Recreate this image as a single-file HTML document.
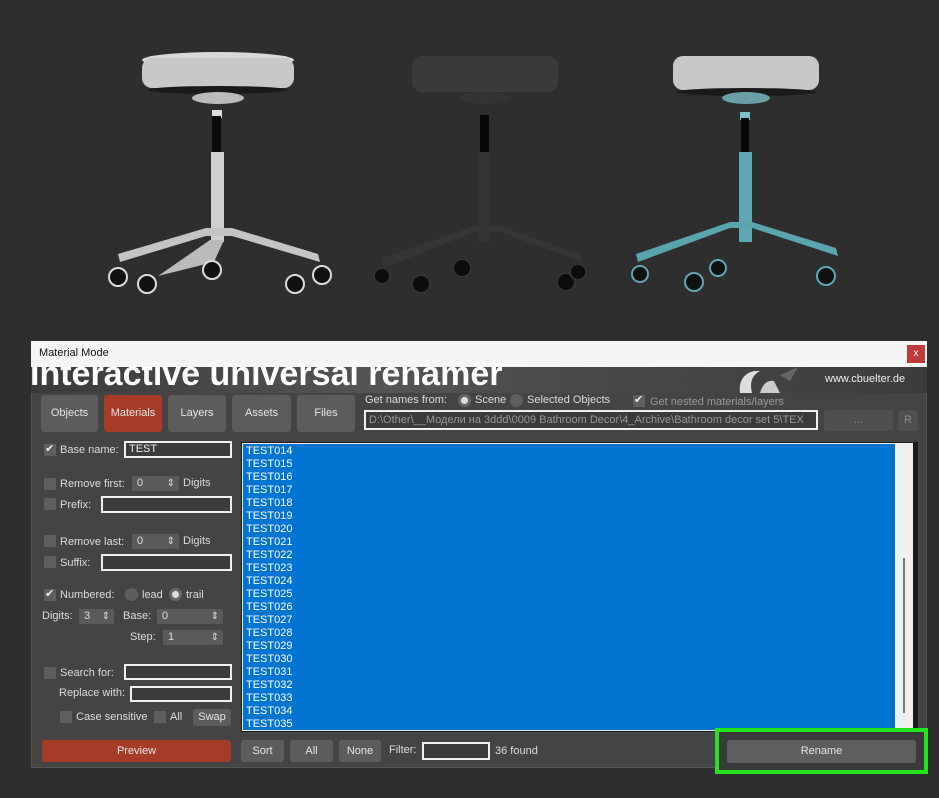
<!DOCTYPE html>
<html><head><meta charset="utf-8"><style>
*{margin:0;padding:0;box-sizing:border-box}
body{width:939px;height:798px;background:#2e2e2e;position:relative;overflow:hidden;font-family:"Liberation Sans","Noto Sans CJK SC",sans-serif;font-size:11px;color:#ddd}
.a{position:absolute}
.btn{position:absolute;background:#5c5c5c;border-radius:3px;color:#e6e6e6;text-align:center;font-size:11px}
.cb{position:absolute;width:12px;height:12px;background:#5e5e5e}
.cb.on::after{content:"✔";position:absolute;left:1px;top:-2px;font-size:11px;color:#eee}
.in{position:absolute;border:2px solid #f0f0f0;background:#3b3b3b;height:16px;color:#eee;padding-left:3px;line-height:12px}
.sp{position:absolute;background:#5a5a5a;height:15px;color:#ddd;padding-left:5px;line-height:15px}
.sp::after{content:"⇕";position:absolute;right:4px;top:0;font-size:10px}
.t{position:absolute;white-space:nowrap}
.rd{position:absolute;width:13px;height:13px;border-radius:50%;background:#5e5e5e}
</style></head><body>
<svg class="a" style="left:0;top:0" width="939" height="330">
 <g>
  <ellipse cx="218" cy="60" rx="76" ry="8" fill="#d8d8d8"/>
  <rect x="142" y="58" width="152" height="30" rx="10" fill="#c8c8c8"/>
  <ellipse cx="218" cy="90" rx="70" ry="4" fill="#1a1a1a"/>
  <ellipse cx="218" cy="98" rx="26" ry="6" fill="#bbb"/>
  <rect x="212" y="110" width="10" height="8" fill="#ddd"/>
  <rect x="212" y="116" width="9" height="38" fill="#0a0a0a"/>
  <rect x="211" y="152" width="13" height="90" fill="#d0d0d0"/>
  <path d="M120 262 L206 236 L232 236 L320 262 L318 254 L232 228 L206 228 L118 254Z" fill="#c4c4c4"/>
  <path d="M158 276 L210 240 L224 240 L214 262Z" fill="#bbb"/>
  <g fill="#111" stroke="#ddd" stroke-width="2"><circle cx="118" cy="277" r="9"/><circle cx="147" cy="284" r="9"/><circle cx="212" cy="270" r="9"/><circle cx="295" cy="284" r="9"/><circle cx="322" cy="275" r="9"/></g>
 </g>
 <g>
  <rect x="412" y="56" width="146" height="36" rx="10" fill="#3a3a3a"/>
  <ellipse cx="485" cy="98" rx="26" ry="6" fill="#333"/>
  <rect x="480" y="115" width="9" height="40" fill="#080808"/>
  <rect x="478" y="152" width="13" height="90" fill="#333"/>
  <path d="M384 268 L475 232 L500 232 L582 262 L580 254 L500 226 L475 226 L382 258Z" fill="#353535"/>
  <g fill="#0c0c0c" stroke="#333" stroke-width="2"><circle cx="382" cy="276" r="8"/><circle cx="421" cy="284" r="9"/><circle cx="462" cy="268" r="9"/><circle cx="566" cy="282" r="9"/><circle cx="578" cy="272" r="8"/></g>
 </g>
 <g>
  <rect x="673" y="56" width="146" height="34" rx="10" fill="#c8c8c8"/>
  <ellipse cx="746" cy="92" rx="70" ry="4" fill="#1a1a1a"/>
  <ellipse cx="746" cy="98" rx="24" ry="6" fill="#6a9fa6"/>
  <rect x="740" y="112" width="10" height="8" fill="#7bc0c8"/>
  <rect x="741" y="118" width="8" height="36" fill="#080808"/>
  <rect x="739" y="152" width="13" height="90" fill="#5fa8b1"/>
  <path d="M638 262 L730 228 L752 228 L838 256 L836 248 L752 222 L730 222 L636 254Z" fill="#5aa4ae"/>
  <g fill="#111" stroke="#5fa8b1" stroke-width="2"><circle cx="640" cy="274" r="8"/><circle cx="694" cy="282" r="9"/><circle cx="718" cy="268" r="8"/><circle cx="826" cy="276" r="9"/></g>
 </g>
</svg>

<div class="a" style="left:31px;top:341px;width:896px;height:427px;background:#444;border:1px solid #555"></div>
<div class="a" style="left:31px;top:367px;width:896px;height:26px;background:linear-gradient(90deg,#3a3a3a,#555 40%,#4a4a4a 60%,#3c3c3c)"></div>
<div class="t" style="left:30px;top:355px;font-size:34px;font-weight:bold;color:#fff;line-height:38px">Interactive universal renamer</div>
<svg class="a" style="left:730px;top:367px" width="70" height="26"><path d="M10 26 Q8 8 24 4 L30 4 Q18 10 22 26Z" fill="#ddd"/><path d="M30 26 Q34 12 44 14 L50 26Z" fill="#ccc"/><path d="M50 8 L68 0 L60 14Z" fill="#666"/></svg>
<div class="a" style="left:31px;top:341px;width:896px;height:26px;background:#f4f6f6"></div>
<div class="t" style="left:39px;top:347px;color:#111;font-size:11px">Material Mode</div>
<div class="a" style="left:907px;top:345px;width:18px;height:18px;background:#c0393b;color:#fff;text-align:center;line-height:17px;font-size:10px">x</div>
<div class="t" style="left:825px;top:373px;color:#eee;font-size:11px">www.cbuelter.de</div>

<div class="btn" style="left:41px;top:395px;width:57px;height:37px;line-height:37px">Objects</div>
<div class="btn" style="left:104px;top:395px;width:58px;height:37px;line-height:37px;background:#a63b27">Materials</div>
<div class="btn" style="left:168px;top:395px;width:58px;height:37px;line-height:37px">Layers</div>
<div class="btn" style="left:232px;top:395px;width:59px;height:37px;line-height:37px">Assets</div>
<div class="btn" style="left:297px;top:395px;width:58px;height:37px;line-height:37px">Files</div>

<div class="t" style="left:365px;top:394px">Get names from:</div>
<div class="rd" style="left:458px;top:394px;background:#ddd;border:3px solid #666"></div>
<div class="t" style="left:475px;top:394px">Scene</div>
<div class="rd" style="left:510px;top:394px"></div>
<div class="t" style="left:527px;top:394px">Selected Objects</div>
<div class="cb on" style="left:633px;top:395px;color:#888"></div>
<div class="t" style="left:650px;top:396px;color:#999">Get nested materials/layers</div>
<div class="in" style="left:364px;top:410px;width:454px;height:20px;color:#999;line-height:16px;overflow:hidden;white-space:nowrap">D:\Other\__Модели на 3ddd\0009 Bathroom Decor\4_Archive\Bathroom decor set  5\TEX</div>
<div class="btn" style="left:824px;top:410px;width:69px;height:21px;line-height:21px;background:#4f4f4f;color:#888">...</div>
<div class="btn" style="left:898px;top:410px;width:20px;height:21px;line-height:21px;background:#4f4f4f;color:#888">R</div>

<div class="cb on" style="left:44px;top:444px"></div><div class="t" style="left:60px;top:444px">Base name:</div>
<div class="in" style="left:124px;top:441px;width:108px;height:17px">TEST</div>
<div class="cb" style="left:44px;top:478px"></div><div class="t" style="left:60px;top:478px">Remove first:</div>
<div class="sp" style="left:132px;top:476px;width:47px">0</div><div class="t" style="left:183px;top:477px">Digits</div>
<div class="cb" style="left:44px;top:498px"></div><div class="t" style="left:60px;top:499px">Prefix:</div>
<div class="in" style="left:101px;top:496px;width:131px;height:17px"></div>
<div class="cb" style="left:44px;top:535px"></div><div class="t" style="left:60px;top:536px">Remove last:</div>
<div class="sp" style="left:132px;top:534px;width:47px">0</div><div class="t" style="left:183px;top:535px">Digits</div>
<div class="cb" style="left:44px;top:556px"></div><div class="t" style="left:60px;top:557px">Suffix:</div>
<div class="in" style="left:101px;top:554px;width:131px;height:17px"></div>

<div class="cb on" style="left:44px;top:589px"></div><div class="t" style="left:60px;top:589px">Numbered:</div>
<div class="rd" style="left:125px;top:588px"></div><div class="t" style="left:142px;top:589px">lead</div>
<div class="rd" style="left:169px;top:588px;background:#ddd;border:3px solid #666"></div><div class="t" style="left:186px;top:589px">trail</div>
<div class="t" style="left:42px;top:610px">Digits:</div><div class="sp" style="left:79px;top:609px;width:35px">3</div>
<div class="t" style="left:123px;top:610px">Base:</div><div class="sp" style="left:157px;top:609px;width:66px">0</div>
<div class="t" style="left:130px;top:631px">Step:</div><div class="sp" style="left:163px;top:630px;width:60px">1</div>

<div class="cb" style="left:44px;top:667px"></div><div class="t" style="left:60px;top:667px">Search for:</div>
<div class="in" style="left:124px;top:664px;width:108px;height:16px"></div>
<div class="t" style="left:59px;top:687px">Replace with:</div>
<div class="in" style="left:130px;top:686px;width:102px;height:16px"></div>
<div class="cb" style="left:60px;top:711px"></div><div class="t" style="left:76px;top:711px">Case sensitive</div>
<div class="cb" style="left:154px;top:711px"></div><div class="t" style="left:170px;top:711px">All</div>
<div class="btn" style="left:193px;top:709px;width:38px;height:17px;line-height:17px">Swap</div>
<div class="btn" style="left:42px;top:740px;width:189px;height:22px;line-height:22px;background:#a63b27">Preview</div>

<div class="a" style="left:241px;top:442px;width:677px;height:290px;background:#1a1a1a"></div>
<div class="a" style="left:242px;top:443px;width:653px;height:288px;background:#0074d1;border:1px solid #eee;border-right:none;padding:1px 0 0 3px;color:#fff;font-size:11px;line-height:13px">TEST014<br>TEST015<br>TEST016<br>TEST017<br>TEST018<br>TEST019<br>TEST020<br>TEST021<br>TEST022<br>TEST023<br>TEST024<br>TEST025<br>TEST026<br>TEST027<br>TEST028<br>TEST029<br>TEST030<br>TEST031<br>TEST032<br>TEST033<br>TEST034<br>TEST035</div>
<div class="a" style="left:895px;top:443px;width:18px;height:288px;background:#f0f0f0"></div>
<div class="a" style="left:903px;top:558px;width:2px;height:155px;background:#777"></div>

<div class="btn" style="left:241px;top:740px;width:43px;height:22px;line-height:22px">Sort</div>
<div class="btn" style="left:290px;top:740px;width:43px;height:22px;line-height:22px">All</div>
<div class="btn" style="left:339px;top:740px;width:42px;height:22px;line-height:22px">None</div>
<div class="t" style="left:389px;top:744px">Filter:</div>
<div class="in" style="left:422px;top:742px;width:68px;height:18px"></div>
<div class="t" style="left:495px;top:745px">36 found</div>

<div class="a" style="left:715px;top:728px;width:213px;height:46px;border:4px solid #22e51c;background:#3a3a3a"></div>
<div class="btn" style="left:727px;top:740px;width:189px;height:23px;line-height:23px;background:#5e5e5e">Rename</div>
</body></html>
